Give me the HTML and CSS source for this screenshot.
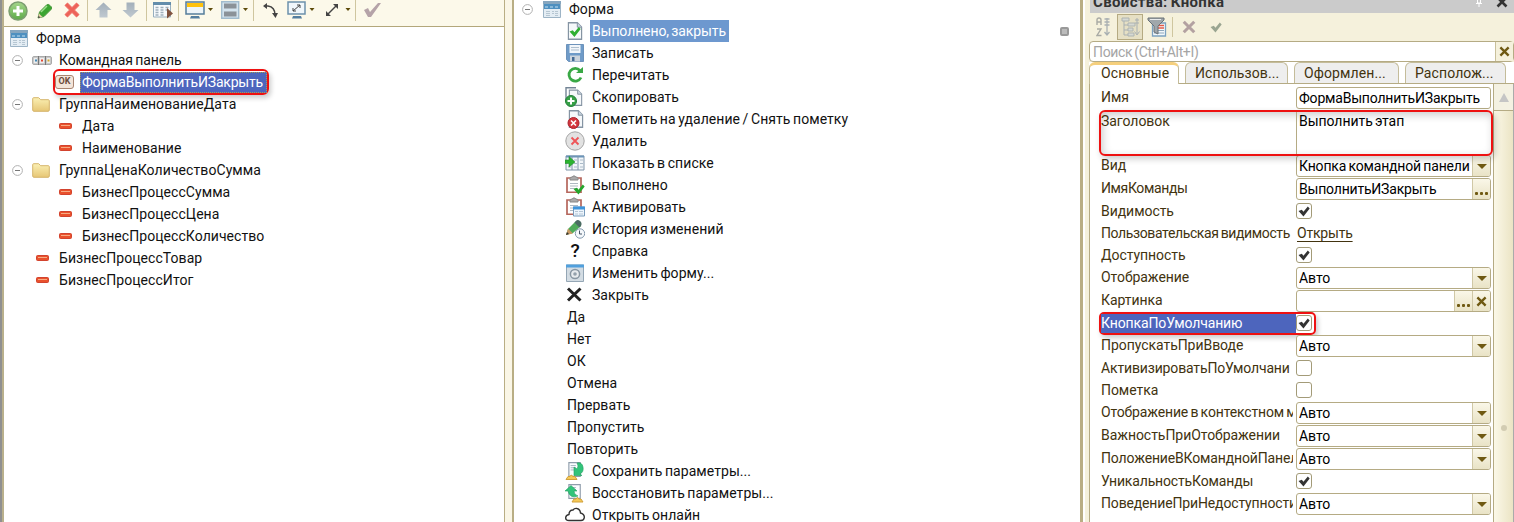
FILE: index.html
```
<!DOCTYPE html>
<html lang="ru">
<head>
<meta charset="utf-8">
<title>Форма</title>
<link rel="stylesheet" href="styles.css">
</head>
<body>
<svg class="defs" width="0" height="0">
<defs>
<linearGradient id="gFolder" x1="0" y1="0" x2="0" y2="1"><stop offset="0" stop-color="#fbf0b4"/><stop offset="1" stop-color="#e6c675"/></linearGradient>
<linearGradient id="gGreen" x1="0" y1="0" x2="0" y2="1"><stop offset="0" stop-color="#a5d68c"/><stop offset="1" stop-color="#5eaa48"/></linearGradient>
<linearGradient id="gArrow" x1="0" y1="0" x2="0" y2="1"><stop offset="0" stop-color="#a3afba"/><stop offset="1" stop-color="#c0c9d0"/></linearGradient>
</defs>
<symbol id="form" viewBox="0 0 18 17"><path d="M.5.5h17v16H.5z" fill="#e4edf4" stroke="#9db4c6"/><path d="M0 0h18v3H0z" fill="#86a6bf"/><path d="M1 3h16v5H1z" fill="#4e90c0"/><path d="M2 6h3M7 6h3M12 6h3" stroke="#c5e0f1"/><path d="M3 10.500h4M3 12.500h4M3 14.500h4M9 10.500h2M9 12.500h2M12 10.500h3M12 12.500h3M12 14.500h3" stroke="#b6c6d2"/></symbol>
<symbol id="minus" viewBox="0 0 11 11"><circle cx="5.500" cy="5.500" r="4.900" fill="#fff" stroke="#b0b0b0"/><path d="M3 5.500h5" stroke="#777"/></symbol>
<symbol id="bar" viewBox="0 0 20 9"><rect x=".5" y=".5" width="19" height="8" rx="1.500" fill="#c9c9c9" stroke="#aaa"/><path d="M6.500 0v9M13.500 0v9" stroke="#777"/><path d="M2 2h3v5H2zM8 2h4v5H8zM15 2h3v5h-3z" fill="#eee"/><path d="M3 3.500h2v2H3z" fill="#4389b5"/><path d="M9 3.500h2v2H9z" fill="#e34a35"/><path d="M15.500 3.500h2v2h-2z" fill="#d4a728"/></symbol>
<symbol id="folder" viewBox="0 0 18 15"><path d="M.7 13V1.700Q.7.700 1.700.700h5l2 2h7.600q1 0 1 1V13q0 1.300-1.300 1.300H2Q.7 14.300.7 13z" fill="url(#gFolder)" stroke="#d5b56c"/></symbol>
<symbol id="field" viewBox="0 0 13 6"><rect x=".5" y=".5" width="12" height="5" rx="1" fill="#e9512c" stroke="#d2432e"/><path d="M2 2.500h9" stroke="#f7ab84"/></symbol>
<symbol id="doc" viewBox="0 0 15 18"><path d="M.8.800h9l4.400 4.400v12H.8z" fill="#f5f8fa" stroke="#8594a3" stroke-width="1.400"/><path d="M9.800.800v4.400h4.400" fill="#cbd7e2" stroke="#8594a3"/></symbol>
<symbol id="board" viewBox="0 0 16 18"><path d="M1 3h14v14.300H1z" fill="#fff" stroke="#b5665c" stroke-width="1.700"/><path d="M4 3.500q0-1.500 2-1.500 2-2.500 4 0 2 0 2 1.500v1.500H4z" fill="#aaa" stroke="#888"/><path d="M4 8.500h8M4 11h8M4 13.500h8" stroke="#aeb9c2"/></symbol>
<symbol id="check" viewBox="0 0 11 10"><path d="M.5 4.500l3-1L5 5.200 9 .500l1.700 1.700L5 9.500z" fill="currentColor"/></symbol>
<symbol id="cross" viewBox="0 0 12 12"><path d="M1.500 1.500l9 9M10.500 1.500l-9 9" stroke="currentColor" stroke-width="2.600"/></symbol>
<symbol id="page" viewBox="0 0 16 17"><path d="M1 .700h13v15.600H1z" fill="#fbfdff" stroke="#8f9dab" stroke-width="1.300"/><path d="M3 4h6M3 6.500h6M3 9h4" stroke="#9cabb9"/></symbol>
</svg>

<div class="app">
  <section class="pane tree-pane">
    <div class="toolbar">
      <svg class="tool" width="20" height="20" viewBox="0 0 20 20"><circle cx="10" cy="10" r="9" fill="url(#gGreen)" stroke="#7c9e70" stroke-width="1.500"/><path d="M10 5v10M5 10h10" stroke="#fff" stroke-width="3"/></svg>
      <svg class="tool" width="16" height="18" viewBox="0 0 16 18"><path d="M1 16l1.500-6L9.500 3Q11 1.500 13 3.500l1 1q1.500 1.500 0 3L7 14.500z" fill="#3ba530" stroke="#4f9a42"/><path d="M4 10l6-6" stroke="#9be08c" stroke-width="1.500"/><path d="M1 16l1-4.500 3.500 3.500z" fill="#ead0aa"/><path d="M1 16l.6-2.200 1.600 1.600z" fill="#333"/></svg>
      <svg class="tool" width="16" height="16" viewBox="0 0 16 16"><path d="M2 2l12 12M14 2L2 14" stroke="#f0736a" stroke-width="4.400"/><path d="M2 2l12 12M14 2L2 14" stroke="#e8493f" stroke-width="2" opacity=".4"/></svg>
      <i class="sep"></i>
      <svg class="tool" width="17" height="16" viewBox="0 0 17 16"><path d="M8.500.500L16.500 8h-4v7.500h-8V8H.5z" fill="url(#gArrow)"/></svg>
      <svg class="tool" width="17" height="16" viewBox="0 0 17 16"><path d="M8.500 15.500L16.500 8h-4V.500h-8V8H.5z" fill="url(#gArrow)"/></svg>
      <i class="sep"></i>
      <svg class="tool" width="21" height="18" viewBox="0 0 21 18"><path d="M.5 2h17v14H.5z" fill="#f7fafc" stroke="#96aebf"/><path d="M0 1h18v3H0z" fill="#638dab"/><path d="M2.500 6.500h3M7.500 6.500h3M12.500 6.500h3M2.500 9h3M7.500 9h3M12.500 9h3M2.500 11.500h3M7.500 11.500h3M2.500 14h3M7.500 14h3" stroke="#a0b0bc" stroke-width="1.400"/><path d="M14 7l6 5.500-6 5z" fill="#80533f"/></svg>
      <i class="sep"></i>
      <svg class="tool" width="28" height="18" viewBox="0 0 28 18"><path d="M1 1h18v12H1z" fill="#edf4f8" stroke="#557e9b" stroke-width="1.500"/><path d="M2 2h16v4H2z" fill="#ffc20d"/><path d="M6 15h8l1 2.500H5z" fill="#547e9f"/><path d="M23 7h5l-2.500 3z" fill="#5d4b0a"/></svg>
      <svg class="tool" width="27" height="18" viewBox="0 0 27 18"><path d="M.7.700h17v16.600h-17z" fill="#d4e4ee" stroke="#a2bccd" stroke-width="1.400"/><path d="M3 2.500h12.500v5H3zM3 10.500h12.500v5H3z" fill="#8b9298"/><path d="M22 7h5l-2.500 3z" fill="#5d4b0a"/></svg>
      <i class="sep"></i>
      <svg class="tool" width="15" height="15" viewBox="0 0 15 15"><path d="M2 3h3q7 1 7 9" fill="none" stroke="#444" stroke-width="1.500"/><path d="M0 3l4-3v6zM9 10h6l-2.500 5z" fill="#444"/></svg>
      <svg class="tool" width="28" height="18" viewBox="0 0 28 18"><path d="M1 1h17v12H1z" fill="#f0f7fb" stroke="#6c91ac" stroke-width="1.500"/><path d="M6 15h8l1 2.500H5z" fill="#547e9f"/><path d="M6 10l7-6M10 4h3v3M6 7v3h3" fill="none" stroke="#444"/><path d="M22.500 7h5L25 10z" fill="#5d4b0a"/></svg>
      <svg class="tool" width="26" height="14" viewBox="0 0 26 14"><path d="M2 12L12 2" stroke="#444" stroke-width="1.500"/><path d="M8 1h5v5zM1 8v5h5z" fill="#444"/><path d="M20.500 5h5L23 8z" fill="#5d4b0a"/></svg>
      <i class="sep"></i>
      <svg class="tool" width="19" height="17" viewBox="0 0 19 17"><path d="M1 9l4-2 2 4 8-9h3L8 16H5z" fill="#b5a3a8"/></svg>
    </div>
    <div class="tree">
      <div class="node l0"><svg width="18" height="17"><use href="#form"/></svg><span class="t">Форма</span></div>
      <div class="node l1"><svg class="tg" width="11" height="11"><use href="#minus"/></svg><svg width="20" height="9"><use href="#bar"/></svg><span class="t t1">Командная панель</span></div>
      <div class="node l2 ok"><span class="okicon">OK</span><span class="chosen">ФормаВыполнитьИЗакрыть</span></div>
      <div class="node l1"><svg class="tg" width="11" height="11"><use href="#minus"/></svg><svg width="18" height="15"><use href="#folder"/></svg><span class="t t2">ГруппаНаименованиеДата</span></div>
      <div class="node l2"><svg width="13" height="6"><use href="#field"/></svg><span>Дата</span></div>
      <div class="node l2"><svg width="13" height="6"><use href="#field"/></svg><span>Наименование</span></div>
      <div class="node l1"><svg class="tg" width="11" height="11"><use href="#minus"/></svg><svg width="18" height="15"><use href="#folder"/></svg><span class="t t2">ГруппаЦенаКоличествоСумма</span></div>
      <div class="node l2"><svg width="13" height="6"><use href="#field"/></svg><span>БизнесПроцессСумма</span></div>
      <div class="node l2"><svg width="13" height="6"><use href="#field"/></svg><span>БизнесПроцессЦена</span></div>
      <div class="node l2"><svg width="13" height="6"><use href="#field"/></svg><span>БизнесПроцессКоличество</span></div>
      <div class="node l3"><svg width="13" height="6"><use href="#field"/></svg><span>БизнесПроцессТовар</span></div>
      <div class="node l3"><svg width="13" height="6"><use href="#field"/></svg><span>БизнесПроцессИтог</span></div>
    </div>
  </section>

  <section class="pane cmd-pane">
    <div class="cmds">
      <div class="cmd root"><svg width="11" height="11"><use href="#minus"/></svg><svg width="18" height="17"><use href="#form"/></svg><span>Форма</span></div>
      <div class="cmd"><svg class="ic" viewBox="0 0 20 20"><use href="#doc" x="2.500" y="1" width="15" height="18"/><use href="#check" x="4" y="5.500" width="12" height="11" color="#2eaf32"/></svg><span class="active">Выполнено, закрыть</span><i class="marker"></i></div>
      <div class="cmd"><svg class="ic" viewBox="0 0 20 20"><path d="M1.500 1.500h17v17h-15l-2-2z" fill="#6f9bc8" stroke="#6d93bb"/><path d="M4.500 2h11v8h-11z" fill="#f2f6fa"/><path d="M6 4.500h8M6 7h8" stroke="#aebfce"/><path d="M5 12.500h10v6H5z" fill="#ccd4dc"/><path d="M7 14h2.500v4H7z" fill="#456b94"/></svg><span>Записать</span></div>
      <div class="cmd"><svg class="ic" viewBox="0 0 20 20"><path d="M15 5.500A6.300 6.300 0 1 0 16 12.500" fill="none" stroke="#39a845" stroke-width="2.800"/><path d="M11 8h7V2z" fill="#39a845"/></svg><span>Перечитать</span></div>
      <div class="cmd"><svg class="ic" viewBox="0 0 20 20"><path d="M1 14V.700h10" fill="none" stroke="#748596" stroke-width="1.400"/><use href="#doc" x="3.500" y="2" width="14" height="17.500"/><circle cx="6" cy="14" r="5.500" fill="#36a046" stroke="#23803a"/><path d="M6 10.500v7M2.500 14h7" stroke="#fff" stroke-width="2"/></svg><span>Скопировать</span></div>
      <div class="cmd"><svg class="ic" viewBox="0 0 20 20"><use href="#doc" x="3.500" y="1" width="15" height="18"/><circle cx="8.500" cy="14" r="5.500" fill="#d2353c" stroke="#ac232e"/><path d="M6 11.500l5 5M11 11.500l-5 5" stroke="#fff" stroke-width="1.600"/></svg><span>Пометить на удаление / Снять пометку</span></div>
      <div class="cmd"><svg class="ic" viewBox="0 0 20 20"><circle cx="10" cy="10" r="9.200" fill="#e2e2e2" stroke="#a4a4a4"/><path d="M6.500 6.500l7 7M13.500 6.500l-7 7" stroke="#ee5558" stroke-width="1.900"/></svg><span>Удалить</span></div>
      <div class="cmd"><svg class="ic" viewBox="0 0 20 20"><path d="M1 3h18v14H1z" fill="#f2f6f9" stroke="#8095a9"/><path d="M1 3.500h18" stroke="#6b94b9" stroke-width="2"/><path d="M7 3v14M13 3v14" stroke="#8095a9"/><path d="M9 7h3M15 7h3M3 14h3M9 10.500h3M15 10.500h3M9 14h3M15 14h3" stroke="#aabac8"/><path d="M0 7h4V3.500L10 9l-6 5v-3.500H0z" fill="#2bb32f" stroke="#238a30" stroke-width=".6"/></svg><span>Показать в списке</span></div>
      <div class="cmd"><svg class="ic" viewBox="0 0 20 20"><use href="#board" x="1" y="0" width="16" height="18"/><use href="#check" x="8" y="9" width="12" height="11" color="#24a62c"/></svg><span>Выполнено</span></div>
      <div class="cmd"><svg class="ic" viewBox="0 0 20 20"><use href="#board" x="1" y="0" width="16" height="18"/><path d="M8.500 10h11v9h-11z" fill="#edf5fc" stroke="#779abb"/><path d="M8 9.500h12v3H8z" fill="#3e95dc"/><path d="M10 14.500h3M14 14.500h4M10 17h3M14 17h4" stroke="#b4c5d5"/></svg><span>Активировать</span></div>
      <div class="cmd"><svg class="ic" viewBox="0 0 20 20"><path d="M1 16l2-6 8-8 5 5-8 7z" fill="#4fab5a"/><path d="M10.500 2.500Q12.500 0 15 2t1 5l-1.500 1.500-5-5z" fill="#4a6b62"/><path d="M1 16l2-6.500 5 5z" fill="#c79a66"/><path d="M1 16l1-3 2 2z" fill="#333"/><circle cx="15" cy="14.500" r="4.700" fill="#f5f8fb" stroke="#8499ad"/><path d="M14.500 11.500v3.500H17" fill="none" stroke="#456"/></svg><span>История изменений</span></div>
      <div class="cmd"><b class="ic q">?</b><span>Справка</span></div>
      <div class="cmd"><svg class="ic" viewBox="0 0 20 20"><path d="M1.500 2h17v16.500h-17z" fill="#d3dce3" stroke="#94a6b5"/><path d="M1 1.500h18v3H1z" fill="#51a0dd"/><circle cx="10" cy="11" r="4.600" fill="#e7ebee" stroke="#8997a3" stroke-width="1.500"/><circle cx="10" cy="11" r="1.800" fill="#93a0ab"/></svg><span>Изменить форму...</span></div>
      <div class="cmd"><svg class="ic" viewBox="0 0 20 20"><path d="M3 3.500l12.500 12M15.500 3.500L3 15.500" stroke="#222" stroke-width="3"/></svg><span>Закрыть</span></div>
      <div class="cmd bare"><span>Да</span></div>
      <div class="cmd bare"><span>Нет</span></div>
      <div class="cmd bare"><span>ОК</span></div>
      <div class="cmd bare"><span>Отмена</span></div>
      <div class="cmd bare"><span>Прервать</span></div>
      <div class="cmd bare"><span>Пропустить</span></div>
      <div class="cmd bare"><span>Повторить</span></div>
      <div class="cmd"><svg class="ic" viewBox="0 0 20 20"><use href="#page" x="3" y="0" width="14" height="17"/><path d="M9 6l3 2q2-3 0-6 5-1 6 4 1 5-3 7l2 1.500H9z" fill="#32c47a" stroke="#239d60" stroke-width=".6"/><path d="M1 18.500l2-3h2q1-3 3 0h2l2 3z" fill="#f5c957" stroke="#d2a13b"/></svg><span>Сохранить параметры...</span></div>
      <div class="cmd"><svg class="ic" viewBox="0 0 20 20"><use href="#page" x="3" y="0" width="14" height="17"/><path d="M0 8l6-5.500L12 8H9q0 4 4 5-8 3-10-5z" fill="#32c47a" stroke="#239d60" stroke-width=".6"/><path d="M7 19l2-3h2q1-3 3 0h2l2 3z" fill="#f5c957" stroke="#d2a13b"/></svg><span>Восстановить параметры...</span></div>
      <div class="cmd"><svg class="ic" viewBox="0 0 20 20"><path d="M4 15.500Q.5 15.500.7 12.500 1 10 4 9.500 4 5 8 5q1.500-2 4-1.500 3 .5 3.500 4.500 4 1 3.800 4.500-.3 3-3.300 3z" fill="#fff" stroke="#333" stroke-width="1.400"/></svg><span>Открыть онлайн</span></div>
    </div>
  </section>

  <section class="props">
    <header class="title"><span>Свойства: Кнопка</span>
      <svg class="pin" width="6" height="8" viewBox="0 0 6 8"><path d="M1.500 0v4h3V0M0 4.500h6M3 5v3" fill="none" stroke="#fff"/></svg>
      <svg class="close" width="12" height="12"><use href="#cross"/></svg>
    </header>
    <div class="ptools">
      <svg class="az" width="14" height="20" viewBox="0 0 14 20"><path d="M1 8V3q0-2 2-2t2 2v5M1 5h4M1 12h4l-4 6.500h4.500" fill="none" stroke="#a9aaa4" stroke-width="1.400"/><path d="M11 1v17M8.500 15l2.500 3 2.500-3M8.500 2h5M8.500 5h5M8.500 8h5" fill="none" stroke="#a9b0b2" stroke-width="1.300"/></svg>
      <span class="pressed"><svg width="20" height="20" viewBox="0 0 20 20"><path d="M2 1h7v3H2zM8 6h7v3H8zM8 11h5v3H8zM8 16h6v3H8z" fill="#d6d9d3" stroke="#aeb4b1"/><path d="M4 4v14h4M4 8h4M4 13h4M17 1v16M14.500 14.500L17 18l2.500-3.500M15 3h4M15 6h4" fill="none" stroke="#a9b0b2"/></svg></span>
      <svg class="filter" width="20" height="20" viewBox="0 0 20 20"><path d="M5.500 6h13v13h-13z" fill="#f3f8fb" stroke="#7ba1c0" stroke-width="1.300"/><path d="M7 16h10M7 13.500h10" stroke="#8ea8bd"/><path d="M11 8.500h6M11 11h6" stroke="#e35b48" stroke-width="1.500"/><path d="M1 1h16v2l-6 6v8l-4-2V9L1 3z" fill="#a0a7ab" stroke="#697177"/><path d="M3 2.500h11" stroke="#e8eaeb"/></svg>
      <i class="sep"></i>
      <svg class="px" width="14" height="14" viewBox="0 0 12 12"><use href="#cross"/></svg>
      <svg class="pc" width="12" height="11"><use href="#check"/></svg>
    </div>
    <div class="search"><span>Поиск (Ctrl+Alt+I)</span><span class="clear"><svg width="11" height="11" viewBox="0 0 12 12"><use href="#cross"/></svg></span></div>
    <nav class="tabs"><span class="tab on">Основные</span><span class="tab">Использов...</span><span class="tab">Оформлен...</span><span class="tab">Располож...</span></nav>
    <div class="sheet">
      <div class="rows">
        <div class="row"><label>Имя</label><div class="field name">ФормаВыполнитьИЗакрыть</div></div>
        <div class="row tall"><label>Заголовок</label><div class="area">Выполнить этап</div></div>
        <div class="row"><label>Вид</label><div class="field kind"><em>Кнопка командной панели</em><span class="btn"><i class="dd"></i></span></div></div>
        <div class="row"><label class="n3">ИмяКоманды</label><div class="field name"><em>ВыполнитьИЗакрыть</em><span class="btn dots"><i></i><i></i><i></i></span></div></div>
        <div class="row c"><label>Видимость</label><span class="box"><svg width="12" height="11"><use href="#check"/></svg></span></div>
        <div class="row c"><label class="n3">Пользовательская видимость</label><a>Открыть</a></div>
        <div class="row c"><label>Доступность</label><span class="box"><svg width="12" height="11"><use href="#check"/></svg></span></div>
        <div class="row"><label>Отображение</label><div class="field"><em>Авто</em><span class="btn"><i class="dd"></i></span></div></div>
        <div class="row"><label>Картинка</label><div class="field"><em></em><span class="btn dots"><i></i><i></i><i></i></span><span class="btn"><svg width="11" height="11" viewBox="0 0 12 12"><use href="#cross"/></svg></span></div></div>
        <div class="row c sel"><label>КнопкаПоУмолчанию</label><span class="box"><svg width="12" height="11"><use href="#check"/></svg></span></div>
        <div class="row"><label>ПропускатьПриВводе</label><div class="field"><em>Авто</em><span class="btn"><i class="dd"></i></span></div></div>
        <div class="row c"><label class="n2">АктивизироватьПоУмолчани</label><span class="box"></span></div>
        <div class="row c"><label>Пометка</label><span class="box"></span></div>
        <div class="row"><label class="n2">Отображение в контекстном меню</label><div class="field"><em>Авто</em><span class="btn"><i class="dd"></i></span></div></div>
        <div class="row"><label>ВажностьПриОтображении</label><div class="field"><em>Авто</em><span class="btn"><i class="dd"></i></span></div></div>
        <div class="row"><label class="n2">ПоложениеВКоманднойПанели</label><div class="field"><em>Авто</em><span class="btn"><i class="dd"></i></span></div></div>
        <div class="row c"><label class="n2">УникальностьКоманды</label><span class="box"><svg width="12" height="11"><use href="#check"/></svg></span></div>
        <div class="row"><label class="n2">ПоведениеПриНедоступности</label><div class="field"><em>Авто</em><span class="btn"><i class="dd"></i></span></div></div>
      </div>
      <div class="scroll"><div class="up"></div><div class="thumb"><i></i></div></div>
    </div>
  </section>
</div>
</body>
</html>
```

FILE: styles.css
```
* { box-sizing: border-box; }
body { margin: 0; font: 14px/22px Roboto, "Noto Sans", sans-serif; letter-spacing: .06px; word-spacing: -1px; color: #111; }
.defs { position: absolute; }
svg { display: block; flex: none; }
i, em { font-style: normal; }
.app { width: 1514px; height: 522px; display: flex; overflow: hidden; background: #faf6e6; }
.pane { background: #fff; overflow: hidden; white-space: nowrap; }

.tree-pane { width: 505px; border-left: 2px solid #909090; border-right: 1px solid #b9ae84; box-shadow: inset 2px 0 #b9b08c; }
.toolbar { height: 27px; margin-left: 2px; background: #fcf9ea; border-bottom: 1px solid #b3a77b; display: flex; align-items: flex-start; padding: 1px 0 0 4px; }
.toolbar .sep { width: 1px; height: 22px; margin-top: -2px; background: #cfc69f; }
.tool:nth-child(2) { margin: 1px 0 0 9px; }
.tool:nth-child(3) { margin: 1px 7px 0 11px; }
.tool:nth-child(5) { margin: 1px 0 0 7px; }
.tool:nth-child(6) { margin: 1px 7px 0 10px; }
.tool:nth-child(8) { margin: 0 4px 0 6px; }
.tool:nth-child(10) { margin: 0 0 0 6px; }
.tool:nth-child(11) { margin: 0 5px 0 8px; }
.tool:nth-child(13) { margin: 2px 0 0 9px; }
.tool:nth-child(14) { margin: 0 0 0 9px; }
.tool:nth-child(15) { margin: 2px 4px 0 10px; }
.tool:nth-child(17) { margin: 0 0 0 7px; }

.node { height: 22px; display: flex; align-items: center; }
.l0 { padding-left: 8px; }
.l0 .t { margin-left: 8px; }
.l1 { padding-left: 10px; }
.l1 .tg { margin-right: 9px; }
.t1 { margin-left: 7px; letter-spacing: -.1px; }
.t2 { margin-left: 9px; letter-spacing: .08px; }
.l2 { padding-left: 57px; }
.l2 span { margin-left: 10px; }
.l3 { padding-left: 34px; }
.l3 span { margin-left: 10px; }
.node.ok { width: 216px; height: 26px; margin: -2px 0 -2px 51px; padding: 0; border: 2px solid #ee1111; border-radius: 6px; box-shadow: 2px 3px 5px #0003; position: relative; }
.ok .okicon { flex: none; width: 19px; height: 14px; margin-left: 0; border: 1.500px solid #a98571; border-radius: 3px; background: #f3e5da; color: #6d4b3c; font-size: 9px; font-weight: 700; line-height: 11px; text-align: center; letter-spacing: 0; }
.ok .chosen { margin-left: 6px; flex: 1; height: 21px; line-height: 21px; padding-left: 2px; background: #4d65bd; color: #fff; outline: 1px dotted #a99a58; outline-offset: -1px; letter-spacing: -.2px; }

.cmd-pane { width: 571px; margin-left: 7px; border-left: 2px solid #b9ae84; border-right: 3px solid #b9ae84; }
.cmds { margin-top: -2px; }
.cmd { height: 22px; display: flex; align-items: center; padding-left: 51px; }
.ic { width: 20px; height: 20px; margin-right: 7px; }
.root { padding-left: 8px; gap: 10px; }
.root span { margin-left: -2px; }
.bare { padding-left: 53px; }
.active { width: 139px; background: #6d98cf; color: #fff; margin-left: -2px; padding-left: 2px; letter-spacing: -.1px; }
.marker { margin: 0 11px 0 auto; width: 9px; height: 9px; border: 2px solid #999; border-radius: 2px; background: #bbb; }
.q { font-size: 19px; font-weight: 500; text-align: center; line-height: 20px; letter-spacing: 0; }

.props { width: 431px; border-left: 2px solid #fff; padding-left: 4px; background: #f5f1dc; overflow: hidden; white-space: nowrap; color: #42330f; letter-spacing: -.05px; }
.title { height: 13px; margin-left: 1px; background: #cbcbcb; display: flex; align-items: flex-end; color: #333; font-weight: 700; overflow: hidden; padding-left: 3px; letter-spacing: .35px; }
.title span { line-height: 20px; font-size: 15px; margin-bottom: 1px; }
.pin { margin: 0 14px 6px auto; }
.close { margin: 0 6px 5px 0; color: #333; }
.ptools { height: 28px; display: flex; align-items: center; padding-left: 7px; }
.pressed { margin-left: 7px; width: 26px; height: 26px; padding: 2px; background: #e6e0c4; border: 1px solid #b5aa82; }
.filter { margin-left: 4px; }
.ptools .sep { width: 1px; height: 20px; background: #cfc69f; margin: 0 9px 0 5px; }
.px { color: #b3a1a1; }
.pc { color: #9aa591; margin-left: 14px; }
.search { height: 21px; border: 1px solid #b5ab84; border-radius: 4px; background: #fff; display: flex; justify-content: space-between; color: #a5a5a5; line-height: 20px; padding-left: 3px; letter-spacing: -.35px; }
.clear { width: 18px; display: grid; place-items: center; border-left: 1px solid #c9c09b; background: #f5f1dc; color: #6f5912; }
.tabs { height: 22px; display: flex; border-bottom: 1px solid #b5ab84; background: #fff; letter-spacing: .1px; }
.tab { height: 21px; margin: 0 0 0 6px; width: 103px; border: 1px solid #c4bc9a; border-bottom: 0; border-radius: 6px 6px 0 0; background: #eee; padding-left: 9px; line-height: 20px; }
.tab.on { margin: 0; width: 90px; height: 22px; padding-left: 11px; background: #fff; border-top: 3px solid #f5cf7c; line-height: 17px; }
.tab:nth-child(3) { width: 105px; }
.tab:nth-child(4) { width: 101px; }
.sheet { display: flex; height: 438px; background: #fff; border-left: 1px solid #b5ab84; }
.rows { width: 403px; padding: 3px 2px 0 9px; }
.row { height: 23px; display: flex; position: relative; }
.row.c { height: 22px; }
.row label { width: 195px; border-right: 1px solid transparent; padding-left: 2px; overflow: hidden; line-height: 21px; }
.row .n2 { letter-spacing: -.15px; }
.row .n3 { letter-spacing: -.38px; }
.field { width: 195px; height: 22px; margin-left: 2px; border: 1px solid #b5ab84; border-radius: 3px; display: flex; color: #000; line-height: 21px; padding-left: 2px; background: #fff; overflow: hidden; }
.name { letter-spacing: -.2px; }
.kind { letter-spacing: -.17px; }
.field em { flex: 1; min-width: 0; overflow: hidden; }
.btn { flex: none; width: 18px; border-left: 1px solid #d0c8a6; background: linear-gradient(#faf7e8, #e9e3c6); display: grid; place-items: center; color: #6f5912; }
.dd { border: 5px solid transparent; border-top: 5px solid #6f5912; border-bottom: 0; }
.dots { display: flex; align-items: flex-end; justify-content: center; gap: 2px; padding-bottom: 4px; }
.dots i { width: 3px; height: 3px; background: #6f5912; border-radius: 1px; }
.row.tall { height: 46px; margin: 0 0 -1px 0; width: 394px; border: 2px solid #ee1111; border-radius: 6px; z-index: 1; box-shadow: 2px 3px 6px #0003, inset 2px 3px 9px #0003; }
.tall label { width: 195px; padding-left: 0; line-height: 18px; }
.tall .area { border-left: 1px solid #b5ab84; padding-left: 2px; line-height: 19px; color: #000; }
.box { width: 16px; height: 16px; margin: 2px 0 0 2px; border: 1px solid #a39b78; border-radius: 3px; display: grid; place-items: center; background: #fff; color: #333; }
.row a { margin-left: 3px; text-decoration: underline; text-underline-offset: 3px; line-height: 21px; letter-spacing: -.2px; }
.row.sel { width: 217px; height: 23px; margin: -1px 0 0; border: 2px solid #ee1111; border-radius: 5px; box-shadow: 2px 3px 5px #0003; }
.sel label { width: 195px; padding-left: 0; line-height: 19px; background: #4d65bd; color: #fff; letter-spacing: -.12px; }
.sel .box { margin: 1px 0 0 0; }
.scroll { width: 21px; border-left: 1px solid #b5ab84; border-right: 1px solid #aaa; display: flex; flex-direction: column; }
.up { height: 27px; background: #f4f1e2; border-bottom: 1px solid #b5ab84; display: grid; place-items: center; }
.up::before { content: ""; border: 5px solid transparent; border-top: 0; border-bottom: 9px solid #c5c5c5; }
.thumb { flex: 1; background: linear-gradient(90deg, #fbf8e8, #ebe4c4); display: grid; place-items: center; padding-top: 222px; }
.thumb i { width: 6px; height: 6px; border-radius: 50%; background: #d2ccb2; }
```
